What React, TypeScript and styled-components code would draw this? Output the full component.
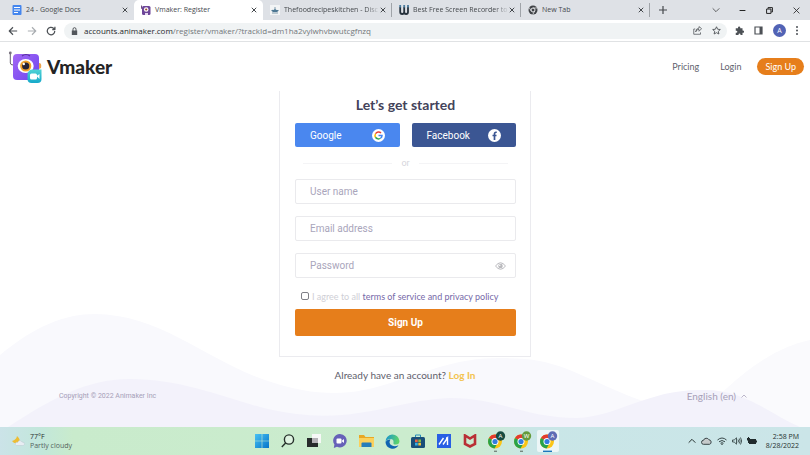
import React from "react";
import styled, { createGlobalStyle, css } from "styled-components";

const system = '"Open Sans", "Noto Sans", sans-serif';
const controls = 'Roboto, "Noto Sans", sans-serif';
const prose = 'Lato, "Noto Sans", sans-serif';

const GlobalStyle = createGlobalStyle`
  *, *::before, *::after { box-sizing: border-box; }
  body { margin: 0; background: #fff; font-family: ${system}; }
  button, input { font: inherit; }
  button { border: 0; padding: 0; background: none; color: inherit; cursor: pointer; }
  a { color: inherit; text-decoration: none; }
  svg { display: block; flex: none; }
`;

const Screen = styled.div`
  min-height: 100vh;
  display: flex;
  flex-direction: column;
`;

/* Browser chrome */

const TabStrip = styled.div`
  display: flex;
  align-items: stretch;
  height: 20px;
  padding-left: 5px;
  background: #dee1e6;
  color: #45494d;
`;

const Tab = styled.div<{ $active?: boolean; $divided?: boolean }>`
  flex: 0 1 129px;
  min-width: 0;
  display: flex;
  align-items: center;
  padding: 0 5px 0 7px;
  border-right: 1px solid ${(p) => (p.$divided ? "#a0a4a9" : "transparent")};
  border-image: ${(p) =>
    p.$divided ? "linear-gradient(transparent 20%, #a0a4a9 20%, #a0a4a9 80%, transparent 80%) 1" : "none"};
  ${(p) =>
    p.$active &&
    css`
      background: #fff;
      border-radius: 5px 5px 0 0;
    `}
`;

const TabTitle = styled.span<{ $fade?: boolean }>`
  flex: 1;
  min-width: 0;
  padding-left: 4px;
  overflow: hidden;
  white-space: nowrap;
  font-size: 7px;
  line-height: 12px;
  ${(p) => p.$fade && css`mask-image: linear-gradient(90deg, #000 86%, transparent);`}
`;

const IconButton = styled.button`
  display: grid;
  place-items: center;
  flex: none;
`;

const NewTabButton = styled(IconButton)`
  width: 26px;
`;

const WindowControls = styled.div`
  display: flex;
  margin-left: auto;
`;

const WindowButton = styled(IconButton)`
  width: 27px;
  color: #222;
`;

const Toolbar = styled.div`
  display: flex;
  align-items: center;
  height: 22px;
  padding: 0 12px 0 8px;
  border-bottom: 1px solid #e0e2e4;
  background: #fff;
  color: #4d5156;
`;

const NavGroup = styled.div`
  display: flex;
  gap: 9px;
`;

const AddressBar = styled.div`
  flex: 1;
  display: flex;
  align-items: center;
  gap: 6px;
  height: 16px;
  margin-left: 8px;
  padding: 0 6px 0 7px;
  border-radius: 8px;
  background: #f0f3f4;
`;

const Address = styled.div`
  flex: 1;
  white-space: nowrap;
  font-size: 8px;
  line-height: 16px;
  color: #72777b;
`;

const Host = styled.span`
  color: #25282b;
`;

const ToolGroup = styled.div<{ $left?: number }>`
  display: flex;
  align-items: center;
  gap: 10px;
  margin-left: ${(p) => p.$left ?? 0}px;
`;

const Avatar = styled.button`
  width: 13px;
  height: 13px;
  border-radius: 50%;
  background: #5263b5;
  color: #fff;
  font-size: 7px;
  line-height: 13px;
`;

/* Registration page */

const Page = styled.div`
  position: relative;
  flex: 1;
  display: flex;
  flex-direction: column;
  font-family: ${controls};
`;

const Waves = styled.svg`
  position: absolute;
  left: 0;
  bottom: 0;
  width: 100%;
  height: 115px;
`;

const SiteHeader = styled.header`
  display: flex;
  align-items: center;
  justify-content: space-between;
  height: 49px;
  padding: 0 6px 0 8px;
  font-family: ${prose};
`;

const Logo = styled.a`
  display: flex;
  align-items: center;
  gap: 5px;
`;

const Wordmark = styled.span`
  font-size: 19px;
  line-height: 28px;
  font-weight: 900;
  color: #242424;
`;

const SiteNav = styled.nav`
  display: flex;
  align-items: center;
  gap: 21px;
  font-size: 9px;
  line-height: 17px;
  color: #5f5f6e;
`;

const NavSignUp = styled.a`
  padding: 0 8px;
  margin-left: -5px;
  border-radius: 9px;
  background: #e67e1b;
  color: #fff;
`;

const Main = styled.main`
  position: relative;
  display: flex;
  flex-direction: column;
  align-items: center;
`;

const Card = styled.form`
  width: 100%;
  max-width: 252px;
  padding: 4px 14px 20px 15px;
  border: 1px solid #ebebef;
  border-top: 0;
  background: #fff;
`;

const Heading = styled.h1`
  margin: 0 0 8px;
  text-align: center;
  font-family: ${prose};
  font-size: 14px;
  line-height: 20px;
  font-weight: 700;
  color: #43435a;
`;

const SocialRow = styled.div`
  display: grid;
  grid-template-columns: 1fr 1fr;
  gap: 12px;
`;

const SocialButton = styled.button<{ $color: string }>`
  display: flex;
  align-items: center;
  justify-content: space-between;
  height: 24px;
  padding: 0 15px;
  border-radius: 2px;
  background: ${(p) => p.$color};
  color: #fff;
  font-size: 10px;
`;

const Divider = styled.div`
  display: flex;
  align-items: center;
  gap: 9px;
  padding: 0 8px;
  height: 32px;
  font-size: 9px;
  color: #d5d5dc;
  &::before, &::after { content: ""; flex: 1; border-top: 1px solid #f4f4f6; }
`;

const Fields = styled.div`
  display: grid;
  gap: 12px;
`;

const Field = styled.label`
  display: flex;
  align-items: center;
  height: 25px;
  padding: 0 9px 0 14px;
  border: 1px solid #eaeaed;
  border-radius: 2px;
  color: #b9b9bd;
`;

const FieldInput = styled.input`
  flex: 1;
  min-width: 0;
  padding: 0;
  border: 0;
  outline: 0;
  background: transparent;
  font-size: 10px;
  color: #43435a;
  &::placeholder { color: #a9a5bb; opacity: 1; }
`;

const Agreement = styled.label`
  display: flex;
  align-items: center;
  gap: 3px;
  margin-top: 8px;
  padding-left: 6px;
  height: 20px;
  font-family: ${prose};
  font-size: 9px;
  white-space: pre;
  color: #cfcfd6;
`;

const Checkbox = styled.input`
  appearance: none;
  width: 8px;
  height: 8px;
  margin: 0;
  border: 1px solid #808087;
  border-radius: 2px;
  background: #fff;
  &:checked { background: #e67e1b; }
`;

const TermsLink = styled.a`
  color: #7669a8;
`;

const SubmitButton = styled.button`
  display: block;
  width: 100%;
  height: 27px;
  margin-top: 3px;
  border-radius: 2px;
  background: #e67e1b;
  color: #fff;
  font-size: 10px;
  font-weight: 700;
`;

const LoginPrompt = styled.p`
  margin: 10px 0 0;
  font-family: ${prose};
  font-size: 10px;
  line-height: 17px;
  color: #5e5e6b;
`;

const LoginLink = styled.a`
  font-weight: 700;
  color: #f3c34f;
`;

const SiteFooter = styled.footer`
  position: relative;
  display: flex;
  align-items: center;
  justify-content: space-between;
  margin-top: auto;
  padding: 0 63px 22px 59px;
  color: #a69fb8;
`;

const Copyright = styled.span`
  font-size: 7px;
  line-height: 18px;
`;

const Language = styled.button`
  display: flex;
  align-items: center;
  gap: 5px;
  font-family: ${prose};
  font-size: 10px;
  line-height: 18px;
`;

/* Desktop taskbar */

const Taskbar = styled.div`
  display: grid;
  grid-template-columns: 1fr auto 1fr;
  align-items: center;
  height: 28px;
  background: linear-gradient(90deg, #cbe3e8 0%, #c2e7db 5%, #c9ebcc 9%, #cbecce 50%, #cceccb 56%, #c9e6e7 66%, #cbe5e8 100%);
  color: #26312f;
  font-size: 7px;
  line-height: 9px;
`;

const Weather = styled.div`
  display: flex;
  align-items: center;
  gap: 5px;
  padding-left: 12px;
`;

const Lines = styled.div<{ $end?: boolean }>`
  display: flex;
  flex-direction: column;
  text-align: ${(p) => (p.$end ? "right" : "left")};
`;

const Muted = styled.span`
  color: #53645d;
`;

const Apps = styled.div`
  display: flex;
  gap: 4px;
`;

const AppButton = styled.button<{ $active?: boolean }>`
  display: grid;
  place-items: center;
  width: 22px;
  height: 22px;
  border-radius: 2px;
  background: ${(p) => (p.$active ? "rgba(255,255,255,.65)" : "none")};
`;

const Tray = styled.div`
  display: flex;
  align-items: center;
  justify-content: flex-end;
  gap: 5px;
  padding-right: 11px;
`;

const Clock = styled(Lines)`
  margin-left: 4px;
`;

/* Drawings */

const Line = ({ d, size = 10, w = 1, box = 12 }: { d: string; size?: number; w?: number; box?: number }) => (
  <svg width={size} height={size} viewBox={`0 0 ${box} ${box}`} fill="none" stroke="currentColor" strokeWidth={w} strokeLinejoin="round">
    <path d={d} />
  </svg>
);

const Close = () => <Line size={6} w={2} d="M1.5 1.5 10.5 10.5M10.5 1.5 1.5 10.5" />;

const DocsIcon = () => (
  <svg width="10" height="10" viewBox="0 0 10 10">
    <rect x=".5" width="9" height="10" rx="1" fill="#4486ee" />
    <path d="M2 2.5h6M2 5h6M2 7.5h4" stroke="#fff" strokeWidth="1" />
  </svg>
);

const VmakerFavicon = () => (
  <svg width="10" height="10" viewBox="0 0 10 10">
    <path d="M.5.5v3h1.5" stroke="#705080" fill="none" />
    <rect x="1" y="1" width="8.5" height="9" rx="1.5" fill="#6d4598" />
    <circle cx="5.2" cy="4.5" r="2.3" fill="#fff" />
    <circle cx="5.2" cy="4.5" r="1.1" fill="#a04c30" />
    <path d="M4 8h3v2H4z" fill="#e6d8f1" />
  </svg>
);

const RecipeIcon = () => (
  <svg width="10" height="10" viewBox="0 0 10 10">
    <rect width="10" height="10" fill="#f2f4f5" />
    <path d="M1 5.5c2-1 3 0 4-2 1 2 2 1 4 2L7 7H3z" fill="#4c7793" />
    <path d="M2 8h6M5 2v2" stroke="#829cac" />
  </svg>
);

const WIcon = () => (
  <svg width="10" height="10" viewBox="0 0 10 10" fill="none" strokeWidth="1.800">
    <path d="M1.2 2v5q0 2 2 2t2-2V2M5.200 7q0 2 1.900 2T9 7V2" stroke="#26313c" />
    <path d="M1.2 0v2.500M5.200 0v2.500M9 0v2.500" stroke="#4a7a9c" />
  </svg>
);

const GreyChrome = () => (
  <svg width="10" height="10" viewBox="0 0 10 10">
    <circle cx="5" cy="5" r="4.5" fill="#404347" />
    <circle cx="5" cy="5" r="2" fill="#404347" stroke="#e4e6e9" />
    <path d="M5 3h4M3.2 6 1.2 2.6M6.7 6 4.8 9.4" stroke="#e4e6e9" strokeWidth=".8" />
  </svg>
);

const VmakerLogo = () => (
  <svg width="34" height="32" viewBox="0 0 34 32">
    <defs>
      <linearGradient id="body" x1="0" x2="1" y2="1">
        <stop stopColor="#a467f5" />
        <stop offset="1" stopColor="#6c45ee" />
      </linearGradient>
      <linearGradient id="cam" y2="1" x2="0">
        <stop stopColor="#50d3d5" />
        <stop offset="1" stopColor="#16a9ca" />
      </linearGradient>
    </defs>
    <path d="M2.3 2v10q0 2 3 2" fill="none" stroke="#66616e" strokeWidth="1" />
    <circle cx="2.3" cy="2" r="1.4" fill="#77717d" />
    <path d="M31 12q3 0 2 5l-2 1z" fill="#eca34e" />
    <rect x="5" y="3" width="26" height="26" rx="4" fill="url(#body)" />
    <path d="M14 5q4-3 8 0" stroke="#573199" strokeWidth="1.2" fill="none" />
    <ellipse cx="17.7" cy="15" rx="8" ry="7" fill="#fff" />
    <circle cx="17.7" cy="15" r="5.6" fill="#f2a12b" />
    <circle cx="17.7" cy="15" r="3.6" fill="#272235" />
    <circle cx="15.8" cy="13" r="1.2" fill="#fff" />
    <path d="M25 18.5h8.5V28q0 4-4 4h-6q-4 0-4-4v-4q0-5.500 5.500-5.500" fill="url(#cam)" />
    <rect x="22" y="22.500" width="7" height="6" rx="1.500" fill="#fff" />
    <path d="m28.500 25 3-2v5z" fill="#fff" />
  </svg>
);

const GoogleIcon = () => (
  <svg width="13" height="13" viewBox="0 0 26 26">
    <circle cx="13" cy="13" r="13" fill="#fff" />
    <g fill="none" strokeWidth="3">
      <path d="M18 8A7 7 0 0 0 7 9.500" stroke="#e94335" />
      <path d="M7 9.500a7 7 0 0 0 0 7" stroke="#fbbc05" />
      <path d="M7 16.500A7 7 0 0 0 17 18.500" stroke="#34a853" />
      <path d="M17 18.500q3-2 3-5.500H13" stroke="#4285f4" />
    </g>
  </svg>
);

const FacebookIcon = () => (
  <svg width="13" height="13" viewBox="0 0 26 26">
    <circle cx="13" cy="13" r="13" fill="#fff" />
    <path d="M17.500 6.500H16q-3 0-3 3.500v12M9 13h8" fill="none" stroke="#3b5693" strokeWidth="3.400" />
  </svg>
);

const EyeIcon = () => (
  <svg width="11" height="8" viewBox="0 0 22 16">
    <path d="M1 8Q11-5 21 8 11 21 1 8Z" fill="none" stroke="currentColor" strokeWidth="2" />
    <circle cx="11" cy="8" r="4.500" fill="currentColor" />
    <circle cx="9.500" cy="6.500" r="1.500" fill="#fff" />
  </svg>
);

const WeatherIcon = () => (
  <svg width="13" height="12" viewBox="0 0 26 24">
    <path d="M10 2q-1 7-10 10 6 8 14 2 4-5-4-12" fill="#edbd34" />
    <path d="M9 21q-4-1-2-5 2-2 4-1 4-7 9-1 6 0 5 5-1 2-4 2z" fill="#e8edf2" stroke="#b9c9d0" />
  </svg>
);

const ChromeIcon = ({ badge, letter, current }: { badge: string; letter: string; current?: boolean }) => (
  <svg width="20" height="22" viewBox="0 0 20 22">
    <circle cx="9" cy="11.500" r="7" fill="#fbc516" />
    <path d="M9 11.500 3 8A7 7 0 0 1 15.500 9z" fill="#e33b2e" />
    <path d="M3 8a7 7 0 0 0 5.500 10.500L12 12.500 9 11.500z" fill="#27a24a" />
    <circle cx="9" cy="11.500" r="3.500" fill="#fff" />
    <circle cx="9" cy="11.500" r="2.600" fill="#347de0" />
    <circle cx="14.500" cy="6" r="4.700" fill={badge} />
    <text x="14.500" y="8.200" fontSize="6" textAnchor="middle" fill="#fff" fontFamily="Noto Sans">{letter}</text>
    <path d={current ? "M5 21.300h9" : "M8 21.300h3"} stroke={current ? "#1b76bd" : "#77877e"} strokeWidth="1.400" />
  </svg>
);

const appIcons: { name: string; active?: boolean; icon: React.ReactNode }[] = [
  {
    name: "Start",
    icon: (
      <svg width="14" height="14" viewBox="0 0 14 14">
        <defs><linearGradient id="win" x2="1" y2="1"><stop stopColor="#48c2f4" /><stop offset="1" stopColor="#0775c9" /></linearGradient></defs>
        <path d="M0 0h6.700v6.700H0zM7.300 0H14v6.700H7.300zM0 7.300h6.700V14H0zM7.300 7.300H14V14H7.300z" fill="url(#win)" />
      </svg>
    ),
  },
  {
    name: "Search",
    icon: (
      <svg width="14" height="14" viewBox="0 0 14 14" fill="none" stroke="#26302b" strokeWidth="1.400">
        <circle cx="8" cy="5.500" r="4.600" fill="#dff3e1" /><path d="M4.800 8.800.8 13" />
      </svg>
    ),
  },
  {
    name: "Task view",
    icon: (
      <svg width="14" height="14" viewBox="0 0 14 14">
        <path d="M5 0h9v9H5z" fill="#f7f8f7" /><path d="M0 4h11v9H0z" fill="#272b2b" /><path d="M5 4h6v5H5z" fill="#b3b1b5" />
      </svg>
    ),
  },
  {
    name: "Chat",
    icon: (
      <svg width="14" height="14" viewBox="0 0 14 14">
        <path d="M7 0a6.700 6.700 0 1 1-3 12.700L.8 14l.6-3.500A6.700 6.700 0 0 1 7 0" fill="#6661b8" />
        <rect x="3.500" y="4.500" width="5" height="5" rx="1" fill="#fff" /><path d="m8.500 7 2.500-2v4z" fill="#fff" />
      </svg>
    ),
  },
  {
    name: "File Explorer",
    icon: (
      <svg width="15" height="14" viewBox="0 0 15 14">
        <path d="M0 1h5l1.500 2H15v10H0z" fill="#e8a825" /><path d="M0 4h15v9H0z" fill="#fbd15c" /><path d="M2.500 9.500q0-1 1-1h8q1 0 1 1V13h-10z" fill="#267dba" />
      </svg>
    ),
  },
  {
    name: "Edge",
    icon: (
      <svg width="15" height="15" viewBox="0 0 15 15">
        <defs><linearGradient id="edge" x2="1" y2=".2"><stop stopColor="#1690d4" /><stop offset="1" stopColor="#5dd56b" /></linearGradient></defs>
        <path d="M.5 8A7 7 0 0 1 14.500 7q0 3.500-4 3.500-2.500 0-2-1.800Q9 5 5.500 5 2 5 .5 8" fill="url(#edge)" />
        <path d="M.5 8Q2 5 5.500 5.500 3 10 7 11.500q3 1.500 6.500-.3A7 7 0 0 1 .5 8" fill="#1064b1" />
      </svg>
    ),
  },
  {
    name: "Microsoft Store",
    icon: (
      <svg width="14" height="14" viewBox="0 0 14 14">
        <path d="M4.500 4V1h5v3" stroke="#288dbb" fill="none" /><rect y="3" width="14" height="11" rx="1.500" fill="#194e79" />
        <path d="M4 5.500h2.700v2.700H4z" fill="#ed6542" /><path d="M7.300 5.500H10v2.700H7.300z" fill="#86bb45" /><path d="M4 8.800h2.700v2.700H4z" fill="#35afe2" /><path d="M7.300 8.800H10v2.700H7.300z" fill="#f3c33b" />
      </svg>
    ),
  },
  {
    name: "MyASUS",
    icon: (
      <svg width="14" height="14" viewBox="0 0 14 14">
        <path d="M0 0h14v14H0z" fill="#285fe4" /><path d="M2 10.500 6.500 4M6 10.500 10.500 4v7M9 4h2" stroke="#fff" strokeWidth="1.400" fill="none" />
      </svg>
    ),
  },
  {
    name: "McAfee",
    icon: (
      <svg width="14" height="14" viewBox="0 0 14 14" fill="none" stroke="#b92f35" strokeWidth="2.600">
        <path d="M2 1.500v8.500l5 2.500 5-2.500V1.500L7 4.500z" />
      </svg>
    ),
  },
  { name: "Chrome, profile A", icon: <ChromeIcon badge="#174d42" letter="A" /> },
  { name: "Chrome, profile W", icon: <ChromeIcon badge="#659b3c" letter="W" /> },
  { name: "Chrome, current", active: true, icon: <ChromeIcon badge="#5e6bb5" letter="A" current /> },
];

const tabs = [
  { title: "24 - Google Docs", icon: <DocsIcon /> },
  { title: "Vmaker: Register", icon: <VmakerFavicon />, active: true },
  { title: "Thefoodrecipeskitchen - Disc", icon: <RecipeIcon />, divided: true, fade: true },
  { title: "Best Free Screen Recorder to", icon: <WIcon />, divided: true, fade: true },
  { title: "New Tab", icon: <GreyChrome />, divided: true },
];

const Browser = () => (
  <>
    <TabStrip>
      {tabs.map((t) => (
        <Tab key={t.title} $active={t.active} $divided={t.divided}>
          {t.icon}
          <TabTitle $fade={t.fade}>{t.title}</TabTitle>
          <IconButton aria-label={`Close ${t.title}`}><Close /></IconButton>
        </Tab>
      ))}
      <NewTabButton aria-label="New tab"><Line size={8} w={1.8} d="M6 0v12M0 6h12" /></NewTabButton>
      <WindowControls>
        <WindowButton aria-label="Search tabs"><Line size={8} d="M1 3.500 6 8.500 11 3.500" /></WindowButton>
        <WindowButton aria-label="Minimize"><Line size={7} w={1.700} d="M1 6h10" /></WindowButton>
        <WindowButton aria-label="Restore"><Line size={7} w={1.700} d="M1 3.500h7.500V11H1zM3.500 3V1H11v7.500H9" /></WindowButton>
        <WindowButton aria-label="Close window"><Line size={7} w={1.400} d="M1 1 11 11M11 1 1 11" /></WindowButton>
      </WindowControls>
    </TabStrip>
    <Toolbar>
      <NavGroup>
        <IconButton aria-label="Back"><Line w={1.400} d="M11 6H1.500M6 1.500 1.500 6 6 10.500" /></IconButton>
        <IconButton aria-label="Forward"><svg width="10" height="10" viewBox="0 0 12 12" fill="none" stroke="#a9adb1" strokeWidth="1.400"><path d="M1 6h9.500M6 1.500 10.500 6 6 10.500" /></svg></IconButton>
        <IconButton aria-label="Reload"><Line w={1.500} d="M10.500 6A4.500 4.500 0 1 1 9 2.700L10.500 4M10.700 1v3.300H7.500" /></IconButton>
      </NavGroup>
      <AddressBar>
        <svg width="7" height="8" viewBox="0 0 7 8"><path d="M.8 3.500h5.400V8H.8z" fill="#52565b" /><path d="M2 4V2.200a1.500 1.500 0 0 1 3 0V4" stroke="#52565b" fill="none" /></svg>
        <Address><Host>accounts.animaker.com</Host>/register/vmaker/?trackId=dm1ha2vylwhvbwutcgfnzq</Address>
        <ToolGroup>
          <IconButton aria-label="Share"><Line size={9} d="M3 4H1v7h9V8.500M3.500 8Q4 4.500 8 4.500V7l3.500-3.500L8 .8v2Q4 3 3.500 8" /></IconButton>
          <IconButton aria-label="Bookmark"><Line size={9} w={1.200} d="m6 1 1.500 3.300 3.600.4-2.700 2.400.8 3.600L6 8.900l-3.200 1.800.8-3.600L.9 4.700l3.600-.4z" /></IconButton>
        </ToolGroup>
      </AddressBar>
      <ToolGroup $left={8}>
        <IconButton aria-label="Extensions"><svg width="9" height="9" viewBox="0 0 12 12" fill="currentColor"><path d="M1 3h3V2a1.500 1.500 0 0 1 3 0v1h3v3h.6a1.500 1.500 0 0 1 0 3H10v3H7.300v-.8a1.300 1.300 0 0 0-2.600 0v.8H1V9h.8a1.300 1.300 0 0 0 0-2.600H1z" /></svg></IconButton>
        <IconButton aria-label="Side panel"><svg width="9" height="9" viewBox="0 0 9 9"><path d="M1 1h7v7H1z" fill="none" stroke="currentColor" strokeWidth="1.200" /><path d="M5.500 1H8v7H5.500z" fill="currentColor" /></svg></IconButton>
        <Avatar aria-label="Profile">A</Avatar>
        <IconButton aria-label="Menu"><svg width="2" height="9" viewBox="0 0 2 9" fill="currentColor"><circle cx="1" cy="1" r="1" /><circle cx="1" cy="4.500" r="1" /><circle cx="1" cy="8" r="1" /></svg></IconButton>
      </ToolGroup>
    </Toolbar>
  </>
);

const Register = () => (
  <Page>
    <Waves viewBox="0 0 810 115" preserveAspectRatio="none" aria-hidden="true">
      <path d="M0 43C35 14 65 2 95 2 160 2 210 50 265 68 350 98 390 68 430 58 470 45 495 45 525 47 565 50 595 72 640 88V115H0Z" fill="#f9f9fd" />
      <path d="M640 88Q690 112 727 76 770 36 810 28V115H640Z" fill="#fafafd" />
      <path d="M8 115C50 88 85 67 130 67 180 67 220 84 260 95 350 118 390 88 450 86 500 86 525 106 577 106 620 104 650 76 705 78 745 78 770 102 800 115Z" fill="#f3f2fb" />
    </Waves>
    <SiteHeader>
      <Logo href="#"><VmakerLogo /><Wordmark>Vmaker</Wordmark></Logo>
      <SiteNav>
        <a href="#">Pricing</a>
        <a href="#">Login</a>
        <NavSignUp href="#">Sign Up</NavSignUp>
      </SiteNav>
    </SiteHeader>
    <Main>
      <Card onSubmit={(e) => e.preventDefault()}>
        <Heading>Let’s get started</Heading>
        <SocialRow>
          <SocialButton type="button" $color="#4a87ef">Google<GoogleIcon /></SocialButton>
          <SocialButton type="button" $color="#3b5693">Facebook<FacebookIcon /></SocialButton>
        </SocialRow>
        <Divider>or</Divider>
        <Fields>
          <Field><FieldInput aria-label="User name" placeholder="User name" /></Field>
          <Field><FieldInput aria-label="Email address" type="email" placeholder="Email address" /></Field>
          <Field>
            <FieldInput aria-label="Password" type="password" placeholder="Password" />
            <IconButton type="button" aria-label="Show password"><EyeIcon /></IconButton>
          </Field>
        </Fields>
        <Agreement>
          <Checkbox type="checkbox" />
          <span>I agree to all <TermsLink href="#">terms of service and privacy policy</TermsLink></span>
        </Agreement>
        <SubmitButton type="submit">Sign Up</SubmitButton>
      </Card>
      <LoginPrompt>Already have an account? <LoginLink href="#">Log In</LoginLink></LoginPrompt>
    </Main>
    <SiteFooter>
      <Copyright>Copyright © 2022 Animaker Inc</Copyright>
      <Language>English (en)<Line size={6} w={1.500} d="M1 9 6 4 11 9" /></Language>
    </SiteFooter>
  </Page>
);

const Desktop = () => (
  <Taskbar>
    <Weather>
      <WeatherIcon />
      <Lines><span>77°F</span><Muted>Partly cloudy</Muted></Lines>
    </Weather>
    <Apps>
      {appIcons.map((a) => (
        <AppButton key={a.name} aria-label={a.name} $active={a.active}>{a.icon}</AppButton>
      ))}
    </Apps>
    <Tray>
      <Line size={8} w={1.500} d="M1 8.500 6 3.500 11 8.500" />
      <svg width="11" height="8" viewBox="0 0 11 8"><path d="M2.500 7.300a2 2 0 0 1 0-4 3 3 0 0 1 5.500-.5 2.300 2.300 0 0 1 .5 4.500z" fill="#c6cacb" stroke="#394548" /></svg>
      <svg width="10" height="8" viewBox="0 0 10 8" fill="none" stroke="#39484a"><path d="M.5 3q4.500-4 9 0M2 4.800q3-2.600 6 0M3.500 6.300q1.500-1.200 3 0" /><circle cx="5" cy="7.200" r=".4" /></svg>
      <svg width="10" height="8" viewBox="0 0 10 8" fill="none" stroke="#39484a" strokeWidth=".9"><path d="M.5 3h1.700L4.500.8v6.400L2.200 5H.5zM6 2.500q1 1.500 0 3M7.300 1.500q1.700 2.500 0 5M8.500.5q2.400 3.500 0 7" /></svg>
      <svg width="10" height="8" viewBox="0 0 10 8"><path d="M2 2h7v5H2z" fill="#202b2d" /><path d="M9 3.500h1v2H9zM0 1h1V0h1v1h1v2.500H2V6H1V3.500H0z" fill="#202b2d" /></svg>
      <Clock $end><span>2:58 PM</span><span>8/28/2022</span></Clock>
    </Tray>
  </Taskbar>
);

export default function App() {
  return (
    <Screen>
      <GlobalStyle />
      <Browser />
      <Register />
      <Desktop />
    </Screen>
  );
}
